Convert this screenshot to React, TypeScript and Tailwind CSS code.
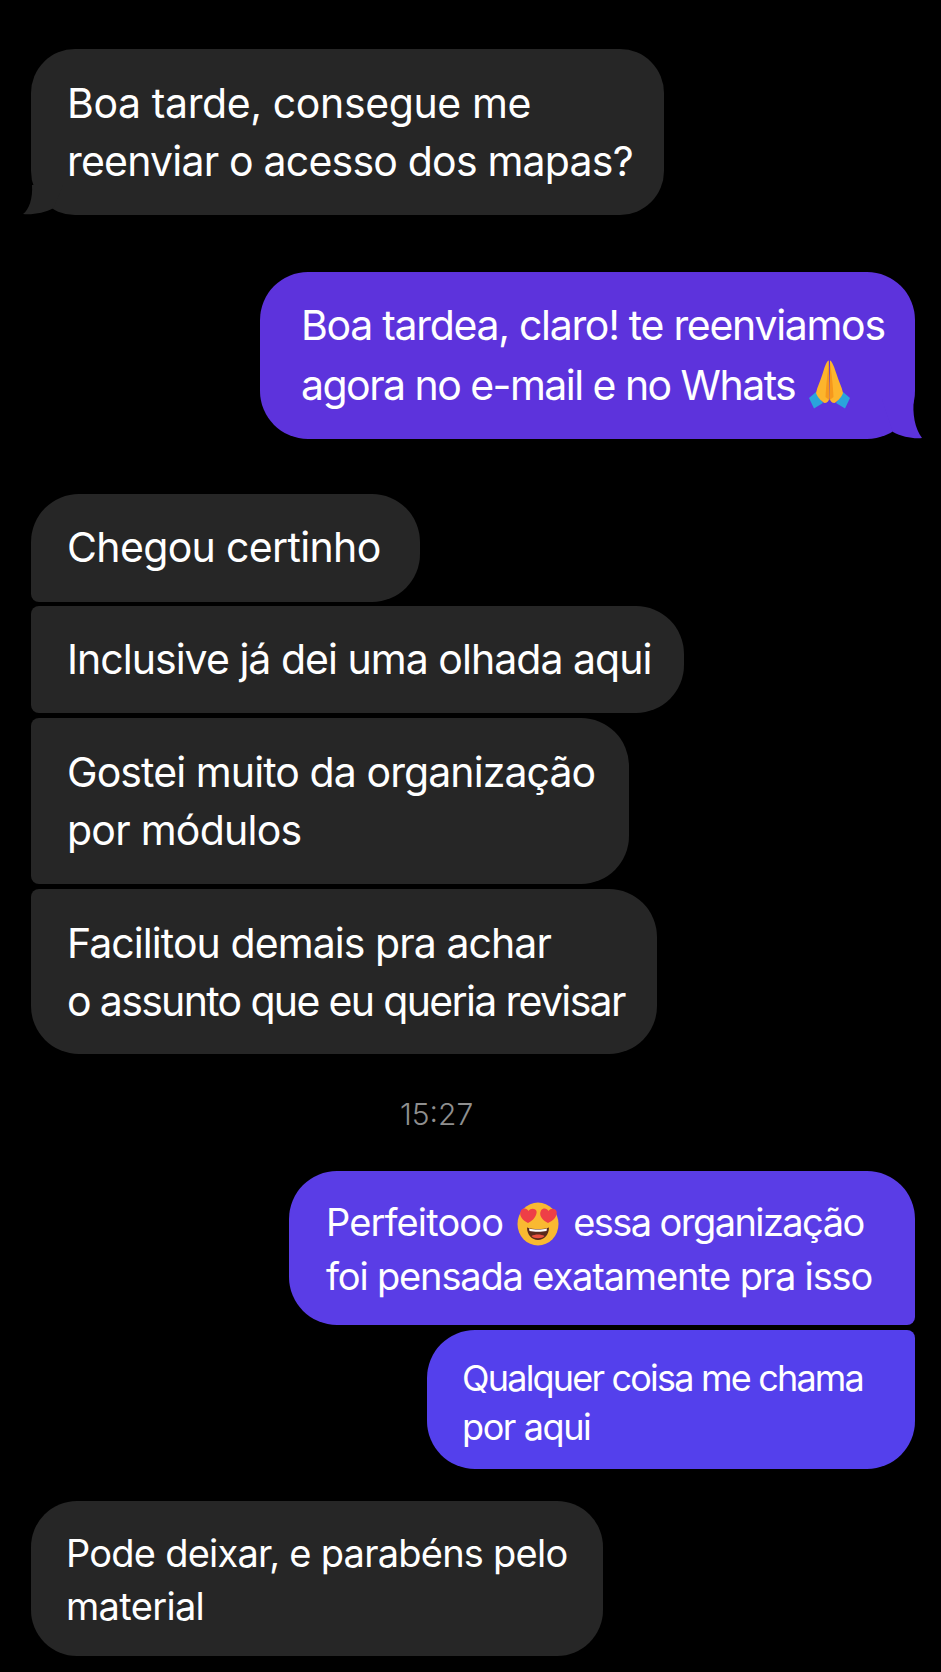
const PrayEmoji = () => (
    <svg viewBox="0 0 42 50" className="inline-block w-[42px] h-[50px] align-middle ml-[14px] -mt-[8px]">
        <path d="M0 38 L7 32 L14 43 L5 48.5 Z" fill="#2aa4dc" />
        <path d="M41 38 L34 32 L27 43 L36 48.5 Z" fill="#2aa4dc" />
        <path d="M19.8 0.5 C17 1.5 15.5 8 13.5 14 C11.5 21 8 27 7 33 C8 36.5 12 41 15.5 43 C18 43 20 41.5 20.3 38 Z" fill="#fdb52c" />
        <path d="M21 0.5 C23.5 1.5 25.5 8 27.5 14 C29.5 21 33 27 34 33 C33 36.5 29 41 25.5 43 C23 43 21 41.5 20.7 38 Z" fill="#fdb52c" />
        <path d="M20 3 C18.5 12 17 26 16.5 37 L20.3 40 Z" fill="#f6981c" />
        <path d="M21 3 C22.5 12 24 26 24.5 37 L20.7 40 Z" fill="#f6981c" />
    </svg>
);

const HeartEyes = () => (
    <svg viewBox="0 0 42 44" className="inline-block w-[42px] h-[44px] align-middle ml-[14px] mr-[14px] -mt-[4px]">
        <ellipse cx="21" cy="22" rx="20.5" ry="21.5" fill="#f9b931" />
        <path d="M11 21 C5 18 1.5 13 4 8.5 C6 5.5 10 6 11.5 9 C13.5 6 18 6 19.5 9 C20.5 13 16 19 11 21 Z" fill="#ee3f47" />
        <path d="M31 21 C36 19 41 14 39.5 9 C38 6 33.5 6 31.5 9 C30 6 26 5.5 24 8.5 C21.5 13 25 18 31 21 Z" fill="#ee3f47" />
        <path d="M10 25.5 C16 27.5 26 27.5 32 25.5 C32 33 27 38 21 38 C15 38 10 33 10 25.5 Z" fill="#5a2a1c" />
        <path d="M12 26.5 C17 27.8 25 27.8 30 26.5 L29.5 29 C25 30 17 30 12.5 29 Z" fill="#ffffff" />
        <path d="M14.5 34 C18 32 24 32 27.5 34 C25.5 37 16.5 37 14.5 34 Z" fill="#e8503f" />
    </svg>
);

export default function App() {
    return (
        <div className="font-['Inter','Noto_Sans',sans-serif] bg-black w-[941px] h-[1672px] overflow-hidden flex flex-col text-white whitespace-nowrap">
            <div className="relative ml-[31px] mt-[49px] w-[633px] h-[166px] bg-[#262626] rounded-[44px] pl-[36px] pt-[25px] text-[41px] leading-[58px]">
                <svg viewBox="0 0 47 30" className="absolute left-[-8px] bottom-0 w-[47px] h-[30px]">
                    <path d="M9 0 C10 13 6 25 0 29 C9 30 22 28 30.5 23 L40 0 Z" fill="#262626" />
                </svg>
                <p className="relative tracking-[-0.39px]">Boa tarde, consegue me</p>
                <p className="relative tracking-[-0.79px]">reenviar o acesso dos mapas?</p>
            </div>

            <div className="relative self-end mr-[26px] mt-[57px] w-[655px] h-[167px] bg-[#5d33dc] rounded-[48px] pl-[41px] pt-[23px] text-[41px] leading-[60px]">
                <svg viewBox="0 0 40 40" className="absolute right-[-7px] bottom-0 w-[40px] h-[40px]">
                    <path d="M32 0 C30 14 33 30 40 39 C32 40 20 38 11 33 L0 0 Z" fill="#5d33dc" />
                </svg>
                <p className="relative tracking-[-1.3px]">Boa tardea, claro! te reenviamos</p>
                <p className="relative tracking-[-1.54px]">agora no e-mail e no Whats<PrayEmoji /></p>
            </div>

            <div className="ml-[31px] mt-[55px] flex flex-col gap-[5px] items-start text-[41px] leading-[58px]">
                <div className="w-[389px] h-[108px] bg-[#262626] rounded-[48px] rounded-bl-[8px] pl-[36px] pt-[24px] tracking-[-0.65px]">
                    Chegou certinho
                </div>
                <div className="w-[653px] h-[107px] bg-[#262626] rounded-r-[48px] rounded-l-[8px] pl-[36px] pt-[24px] -mt-[1px] tracking-[-0.97px]">
                    Inclusive já dei uma olhada aqui
                </div>
                <div className="w-[598px] h-[166px] bg-[#262626] rounded-r-[48px] rounded-l-[8px] pl-[36px] pt-[25px]">
                    <p className="tracking-[-0.91px]">Gostei muito da organização</p>
                    <p className="tracking-[-0.74px]">por módulos</p>
                </div>
                <div className="w-[626px] h-[165px] bg-[#262626] rounded-[48px] rounded-tl-[8px] pl-[36px] pt-[25px]">
                    <p className="tracking-[-0.93px]">Facilitou demais pra achar</p>
                    <p className="tracking-[-1.66px]">o assunto que eu queria revisar</p>
                </div>
            </div>

            <p className="mt-[40px] ml-[400px] text-[30px] leading-[40px] font-light text-[#8f8f8f]">15:27</p>

            <div className="mt-[37px] self-end mr-[26px] flex flex-col items-end gap-[5px]">
                <div className="w-[626px] h-[154px] bg-[#5a3de6] rounded-[48px] rounded-br-[8px] pl-[37px] pt-[24px] text-[38px] leading-[54px]">
                    <p className="h-[54px]">
                        <span className="tracking-[-0.87px]">Perfeitooo</span>
                        <HeartEyes />
                        <span className="tracking-[-1.57px]">essa organização</span>
                    </p>
                    <p className="tracking-[-1.16px]">foi pensada exatamente pra isso</p>
                </div>
                <div className="w-[488px] h-[139px] bg-[#5440ec] rounded-[48px] rounded-tr-[8px] pl-[35px] pt-[24px] text-[36px] leading-[49px]">
                    <p className="tracking-[-1.8px]">Qualquer coisa me chama</p>
                    <p className="tracking-[-1.4px]">por aqui</p>
                </div>
            </div>

            <div className="ml-[31px] mt-[32px] w-[572px] h-[155px] bg-[#262626] rounded-[46px] pl-[35px] pt-[26px] text-[38px] leading-[53px]">
                <p className="tracking-[-0.76px]">Pode deixar, e parabéns pelo</p>
                <p className="tracking-[-0.67px]">material</p>
            </div>
        </div>
    );
}
